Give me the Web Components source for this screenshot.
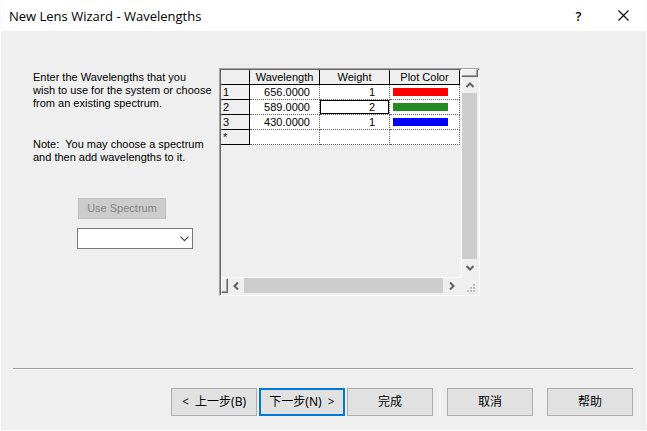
<!DOCTYPE html>
<html lang="zh-CN">
<head>
<meta charset="utf-8">
<title>New Lens Wizard - Wavelengths</title>
<style>
html, body { margin: 0; }
body { font: 11px/13px "Liberation Sans", sans-serif; color: #000; }
</style>
</head>
<body>
<wizard-dialog>
  <title-bar slot="title">New Lens Wizard - Wavelengths</title-bar>
  <wizard-notes slot="notes">
    <p>Enter the Wavelengths that you<br>wish to use for the system or choose<br>from an existing spectrum.</p>
    <p>Note:&nbsp; You may choose a spectrum<br>and then add wavelengths to it.</p>
  </wizard-notes>
  <spectrum-picker slot="notes"></spectrum-picker>
  <wavelength-sheet slot="sheet"></wavelength-sheet>
  <wizard-button slot="actions">&lt;&nbsp; 上一步(B)</wizard-button>
  <wizard-button slot="actions" primary>下一步(N)&nbsp; &gt;</wizard-button>
  <wizard-button slot="actions">完成</wizard-button>
  <wizard-button slot="actions" apart>取消</wizard-button>
  <wizard-button slot="actions" apart>帮助</wizard-button>
</wizard-dialog>
<script>
const define = (name, html) => {
  const template = document.createElement('template');
  template.innerHTML = html;
  customElements.define(name, class extends HTMLElement {
    constructor() {
      super();
      this.attachShadow({ mode: 'open' }).append(template.content.cloneNode(true));
    }
  });
};

define('wizard-dialog', `
<style>
:host { display: flex; flex-direction: column; min-height: 100vh; box-sizing: border-box; background: #efefef; border: 1px solid #fafafa; border-top: 0; }
main { flex: 1; display: flex; padding: 37px 16px 16px 32px; }
.notes { flex: 0 0 186px; }
footer { margin: 0 13px 14px 12px; border-top: 1px solid #a0a0a0; box-shadow: inset 0 1px #fff; padding-top: 19px; display: flex; justify-content: flex-end; gap: 2px; }
</style>
<slot name="title"></slot>
<main><div class="notes"><slot name="notes"></slot></div><slot name="sheet"></slot></main>
<footer><slot name="actions"></slot></footer>`);

define('title-bar', `
<style>
:host { display: flex; align-items: center; height: 31px; background: #fff; padding-left: 8px; font: 13px/16px "Open Sans", sans-serif; }
h1 { flex: 1; margin: 0; font: inherit; }
button { width: 45px; height: 31px; border: 0; padding: 0; background: none; color: #000; font: 600 13px/30px "Open Sans", sans-serif; }
svg { display: block; margin: auto; }
</style>
<h1><slot></slot></h1>
<button aria-label="Help">?</button>
<button aria-label="Close"><svg width="11" height="11" viewBox="0 0 11 11"><path d="M.5 .5l10 10M10.5 .5l-10 10" fill="none" stroke="#000" stroke-width="1.1"/></svg></button>`);

define('wizard-notes', `
<style>
:host { display: block; padding-top: 3px; white-space: nowrap; }
::slotted(p) { margin: 0 0 28px; }
</style>
<slot></slot>`);

define('spectrum-picker', `
<style>
:host { display: flex; flex-direction: column; align-items: flex-start; gap: 9px; padding: 6px 0 0 44px; }
button { width: 88px; height: 21px; margin-left: 1px; padding: 0; border: 1px solid #bfbfbf; background: #ccc; color: #838383; font: inherit; }
.combo { display: grid; align-items: center; width: 116px; }
select, svg { grid-area: 1 / 1; }
select { appearance: none; width: 100%; height: 21px; border: 1px solid #7a7a7a; border-radius: 0; background: #fff; font: inherit; }
svg { justify-self: end; margin-right: 4px; pointer-events: none; }
</style>
<button disabled>Use Spectrum</button>
<div class="combo">
<select aria-label="Spectrum"><option></option></select>
<svg width="9" height="6" viewBox="0 0 9 6"><path d="M.5 .7l4 4 4-4" fill="none" stroke="#444" stroke-width="1.2"/></svg>
</div>`);

define('wizard-button', `
<style>
:host { display: block; }
:host([apart]) { margin-left: 12px; }
button { display: block; width: 86px; height: 28px; padding: 0; border: 1px solid #adadad; background: #e1e1e1; color: #000; font: 12px/16px "Noto Sans", "Noto Sans CJK SC", sans-serif; white-space: nowrap; }
:host([primary]) button { border: 2px solid #0078d7; }
</style>
<button><slot></slot></button>`);

define('scroll-rail', `
<style>
:host { display: flex; flex: 1; min-width: 0; min-height: 0; }
:host([vertical]) { flex-direction: column; }
button { flex: none; display: grid; place-items: center; width: 16px; height: 15px; border: 0; padding: 0; background: none; }
button:last-child { width: 18px; }
:host([vertical]) button { width: 15px; height: 16px; }
:host([vertical]) button:last-child { height: 18px; }
.thumb { flex: 1; background: #cdcdcd; }
path { fill: none; stroke: #606060; stroke-width: 2; }
.h { display: block; }
.v { display: none; }
:host([vertical]) .h { display: none; }
:host([vertical]) .v { display: block; }
</style>
<button aria-label="Scroll back">
<svg class="h" width="8" height="8" viewBox="0 0 8 8"><path d="M6 .5L2.500 4 6 7.500"/></svg>
<svg class="v" width="8" height="8" viewBox="0 0 8 8"><path d="M.5 6L4 2.500 7.500 6"/></svg></button>
<div class="thumb"></div>
<button aria-label="Scroll forward">
<svg class="h" width="8" height="8" viewBox="0 0 8 8"><path d="M2 .5L5.500 4 2 7.500"/></svg>
<svg class="v" width="8" height="8" viewBox="0 0 8 8"><path d="M.5 2L4 5.500 7.500 2"/></svg></button>`);

define('wavelength-sheet', `
<style>
:host { display: grid; grid-template: minmax(207px, auto) 16px / 240px 16px; align-self: flex-start; border: 1px solid; border-color: #a0a0a0 #fff #fff #a0a0a0; box-shadow: inset 1px 1px #696969; padding: 1px 2px 2px 1px; }
table { table-layout: fixed; width: 239px; border-spacing: 0; align-self: start; }
th, td { box-sizing: border-box; height: 15px; padding: 0; font: inherit; line-height: 14px; border: 0 dotted #606060; border-width: 0 1px 1px 0; background: #fff; text-align: right; }
th { background: #efefef; text-align: center; border: solid #000; border-width: 0 1px 1px 0; }
tbody th { text-align: left; padding-left: 2px; }
.index { width: 29px; }
td:nth-child(2) { padding-right: 9px; }
td:nth-child(3) { padding-right: 14px; }
.active { box-shadow: inset 0 0 0 1px #000; }
.swatch { width: 55px; height: 8px; margin-left: 3px; }
.side { display: flex; flex-direction: column; box-shadow: inset 1px 0 #fff; padding-left: 1px; }
.base { display: flex; box-shadow: inset 0 1px #fff; padding-top: 1px; }
.split { box-sizing: border-box; flex: none; background: #efefef; border: 1px solid; border-color: #fff #696969 #696969 #fff; box-shadow: inset -1px -1px #a0a0a0; }
.side .split { height: 8px; width: 17px; margin: -1px 0 0 -1px; }
.base .split { width: 7px; }
.grip { align-self: end; justify-self: end; margin: 0 2px 1px 0; }
</style>
<table>
<thead><tr><th class="index" aria-label="Row"></th><th>Wavelength</th><th>Weight</th><th>Plot Color</th></tr></thead>
<tbody>
<tr><th>1</th><td>656.0000</td><td>1</td><td><div class="swatch" style="background:#f00"></div></td></tr>
<tr><th>2</th><td>589.0000</td><td class="active">2</td><td><div class="swatch" style="background:#228b22"></div></td></tr>
<tr><th>3</th><td>430.0000</td><td>1</td><td><div class="swatch" style="background:#00f"></div></td></tr>
<tr><th>*</th><td></td><td></td><td></td></tr>
</tbody>
</table>
<div class="side"><div class="split"></div><scroll-rail vertical></scroll-rail></div>
<div class="base"><div class="split"></div><scroll-rail></scroll-rail></div>
<svg class="grip" width="8" height="8" viewBox="0 0 8 8"><path d="M6 0h2v2h-2zM3 3h2v2h-2zM6 3h2v2h-2zM0 6h2v2h-2zM3 6h2v2h-2zM6 6h2v2h-2z" fill="#bfbfbf"/></svg>`);
</script>
</body>
</html>
